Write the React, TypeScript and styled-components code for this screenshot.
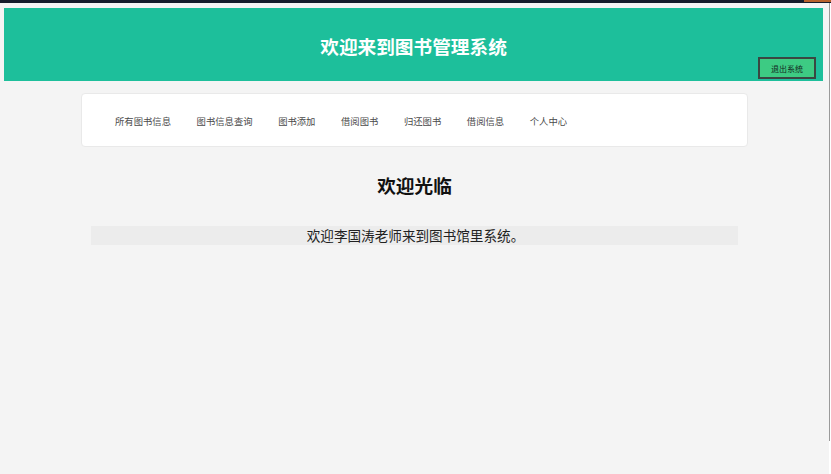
import React from 'react'
import styled, { createGlobalStyle } from 'styled-components'

const GlobalStyle = createGlobalStyle`
  html, body {
    margin: 0;
    padding: 0;
    background: #f4f4f4;
    font-family: "Microsoft YaHei", "Noto Sans CJK SC", "Noto Sans", sans-serif;
  }
`

const navItems = ['所有图书信息', '图书信息查询', '图书添加', '借阅图书', '归还图书', '借阅信息', '个人中心']

const App: React.FC = () => {
  return (
    <>
      <GlobalStyle />
      <Frame>
        <TopStrip>
          <TabHint />
        </TopStrip>
        <Body>
          <Main>
            <Header>
              <HeaderTitle>欢迎来到图书管理系统</HeaderTitle>
              <LogoutButton>退出系统</LogoutButton>
            </Header>
            <NavCard>
              {navItems.map((item) => (
                <NavItem key={item} href="#">
                  {item}
                </NavItem>
              ))}
            </NavCard>
            <Welcome>欢迎光临</Welcome>
            <Greeting>欢迎李国涛老师来到图书馆里系统。</Greeting>
          </Main>
          <ScrollTrack>
            <ScrollThumb />
          </ScrollTrack>
        </Body>
      </Frame>
    </>
  )
}

const Frame = styled.div`
  width: 831px;
  height: 474px;
  display: flex;
  flex-direction: column;
  overflow: hidden;
`

const TopStrip = styled.div`
  height: 3px;
  background: #161c2c;
  display: flex;
  justify-content: flex-end;
  flex-shrink: 0;
`

const TabHint = styled.div`
  width: 27px;
  height: 2px;
  background: #b8622c;
`

const Body = styled.div`
  flex: 1;
  display: flex;
`

const Main = styled.div`
  flex: 1;
  display: flex;
  flex-direction: column;
  align-items: center;
  padding-top: 5px;
`

const Header = styled.div`
  position: relative;
  align-self: stretch;
  margin: 0 6px 0 4px;
  height: 73px;
  background: #1dbf9b;
  display: flex;
  align-items: center;
  justify-content: center;
`

const HeaderTitle = styled.h1`
  margin: 3px 0 0;
  color: #ffffff;
  font-size: 18.67px;
  font-weight: 700;
  line-height: 26px;
`

const LogoutButton = styled.button`
  position: absolute;
  right: 7px;
  bottom: 2px;
  width: 58px;
  height: 22px;
  padding: 0;
  background: #3dcb83;
  border: 2px solid #3a4742;
  color: #14281e;
  font-family: inherit;
  font-size: 8px;
  cursor: pointer;
`

const NavCard = styled.nav`
  box-sizing: border-box;
  width: 667px;
  height: 54px;
  margin-top: 12px;
  padding-left: 33px;
  background: #ffffff;
  border: 1px solid #e9e9e9;
  border-radius: 4px;
  display: flex;
  align-items: center;
  gap: 25.6px;
`

const NavItem = styled.a`
  color: #4a4a4a;
  font-size: 9.33px;
  line-height: 14px;
  text-decoration: none;
  margin-top: 1px;
`

const Welcome = styled.h2`
  margin: 25px 0 0;
  color: #111111;
  font-size: 18.67px;
  font-weight: 700;
  line-height: 26px;
`

const Greeting = styled.p`
  box-sizing: border-box;
  width: 647px;
  margin: 28px 0 0;
  padding-left: 2px;
  background: #ececec;
  color: #222222;
  font-size: 13.6px;
  line-height: 19px;
  text-align: center;
`

const ScrollTrack = styled.div`
  width: 2px;
  background: #ffffff;
  display: flex;
  flex-direction: column;
`

const ScrollThumb = styled.div`
  width: 1px;
  height: 438px;
  background: #9a9a9a;
`

export default App
